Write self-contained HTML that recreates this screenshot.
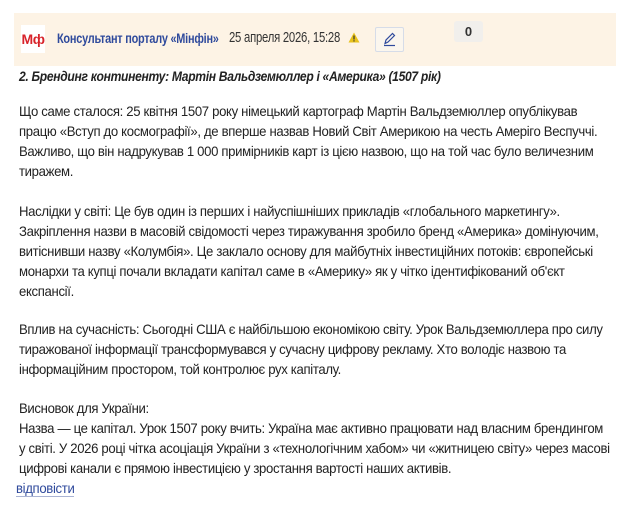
<!DOCTYPE html>
<html><head><meta charset="utf-8"><style>
body{margin:0;width:626px;height:512px;background:#fff;font-family:"Liberation Sans",sans-serif;color:#222;overflow:hidden;position:relative}
.hd{position:absolute;left:14px;top:13px;width:602px;height:53px;background:#fdf3e5}
.logo{position:absolute;left:21px;top:25px;width:24px;height:28px;background:#fff;color:#d8232a;font-weight:bold;font-size:14px;line-height:28px;text-align:center;letter-spacing:-0.5px}
.name{position:absolute;left:57px;top:30px;color:#2f4a9c;font-weight:bold;font-size:14px;letter-spacing:-0.3px;transform:scaleX(0.78);transform-origin:0 0;white-space:nowrap}
.date{position:absolute;left:229px;top:30px;font-size:14.5px;color:#333;letter-spacing:-0.3px;transform:scaleX(0.78);transform-origin:0 0;white-space:nowrap}
.warn{position:absolute;left:348px;top:32px}
.edit{position:absolute;left:375px;top:27px;width:29px;height:25px;border:1px solid #d6dce8;background:#fbf6ee;border-radius:2px;box-sizing:border-box}
.cnt{position:absolute;left:454px;top:21px;width:29px;height:21px;background:#f1efec;border-radius:3px;font-size:13px;font-weight:bold;text-align:center;line-height:21px;color:#333}
.t{position:absolute;left:19px;font-size:13.6px;letter-spacing:-0.35px;line-height:20px;white-space:nowrap;transform:scaleX(0.967);transform-origin:0 0}
a{color:#2f4a9c;text-decoration:none;border-bottom:1px solid #aab4d4}
</style></head><body>
<div class="hd"></div>
<div class="logo">Мф</div>
<div class="name">Консультант порталу «Мінфін»</div>
<div class="date">25 апреля 2026, 15:28</div>
<svg class="warn" width="12" height="11" viewBox="0 0 12 11"><path d="M6 0.5L11.5 10.5H0.5Z" fill="#e8c21c"/><rect x="5.4" y="3.5" width="1.2" height="4" fill="#333"/><rect x="5.4" y="8.3" width="1.2" height="1.2" fill="#333"/></svg>
<div class="edit"><svg width="27" height="23" viewBox="0 0 27 23"><path d="M9 15.5L10 12L16.5 5.5L18.5 7.5L12 14Z" fill="none" stroke="#2f4a9c" stroke-width="1.2"/><line x1="8" y1="17.5" x2="19" y2="17.5" stroke="#2f4a9c" stroke-width="1.2"/></svg></div>
<div class="cnt">0</div>
<div class="t" style="top:67px;font-weight:bold;font-style:italic;transform:scaleX(0.89)">2. Брендинг континенту: Мартін Вальдземюллер і «Америка» (1507 рік)</div>
<div class="t" style="top:102px">Що саме сталося: 25 квітня 1507 року німецький картограф Мартін Вальдземюллер опублікував<br>працю «Вступ до космографії», де вперше назвав Новий Світ Америкою на честь Амеріго Веспуччі.<br>Важливо, що він надрукував 1 000 примірників карт із цією назвою, що на той час було величезним<br>тиражем.</div>
<div class="t" style="top:202px">Наслідки у світі: Це був один із перших і найуспішніших прикладів «глобального маркетингу».<br>Закріплення назви в масовій свідомості через тиражування зробило бренд «Америка» домінуючим,<br>витіснивши назву «Колумбія». Це заклало основу для майбутніх інвестиційних потоків: європейські<br>монархи та купці почали вкладати капітал саме в «Америку» як у чітко ідентифікований об'єкт<br>експансії.</div>
<div class="t" style="top:320px">Вплив на сучасність: Сьогодні США є найбільшою економікою світу. Урок Вальдземюллера про силу<br>тиражованої інформації трансформувався у сучасну цифрову рекламу. Хто володіє назвою та<br>інформаційним простором, той контролює рух капіталу.</div>
<div class="t" style="top:399px">Висновок для України:<br>Назва — це капітал. Урок 1507 року вчить: Україна має активно працювати над власним брендингом<br>у світі. У 2026 році чітка асоціація України з «технологічним хабом» чи «житницею світу» через масові<br>цифрові канали є прямою інвестицією у зростання вартості наших активів.</div>
<div class="t" style="top:479px;left:16px"><a>відповісти</a></div>
</body></html>
